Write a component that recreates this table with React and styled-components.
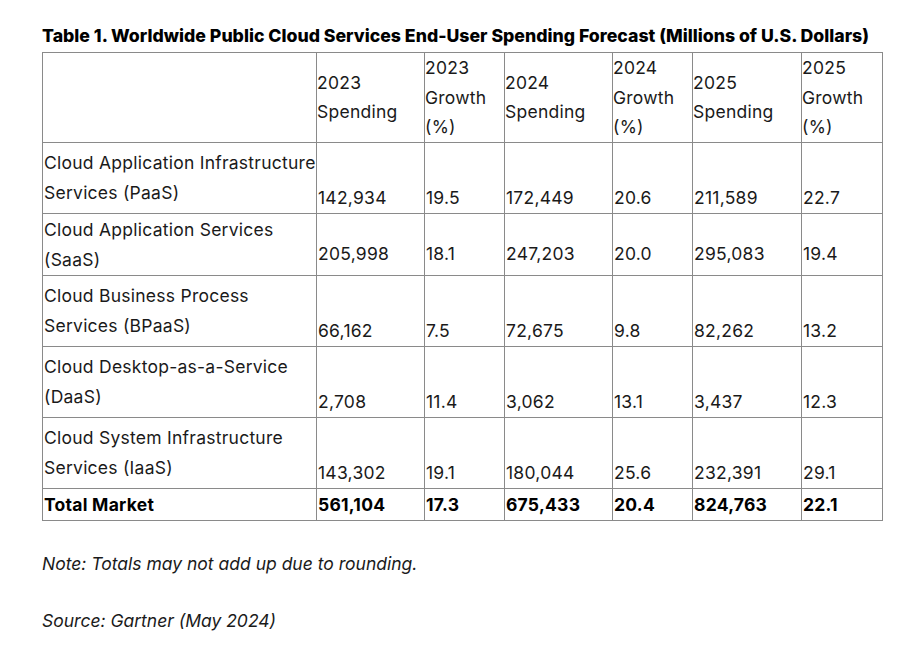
import React from 'react';
import styled, { createGlobalStyle } from 'styled-components';

const GlobalStyle = createGlobalStyle`
  body {
    margin: 0;
    background: #fff;
    color: #1a1a1a;
    font-family: Inter, "Liberation Sans", sans-serif;
  }
`;

const Page = styled.div`
  padding: 27px 0 0 42px;
  width: 840px;
`;

const Title = styled.h3`
  margin: 0 0 7px;
  font-size: 17.7px;
  font-weight: 800;
  line-height: 18px;
  color: #000;
  white-space: nowrap;
`;

const Table = styled.table`
  border-collapse: collapse;
  table-layout: fixed;
  width: 840px;
  font-size: 17.5px;
  letter-spacing: 0.25px;
  line-height: 30px;
`;

const HeadCell = styled.td`
  border: 1px solid #8a8a8a;
  padding: 0;
  vertical-align: middle;
  font-weight: 400;
  line-height: 29.6px;
  text-align: left;
`;

const LabelCell = styled.td`
  border: 1px solid #8a8a8a;
  padding: ${p => (p.$tight ? '1px 0 0' : '5px 0 5px')};
  padding-left: 1px;
  vertical-align: top;
  font-weight: ${p => (p.$total ? 700 : 400)};
  color: ${p => (p.$total ? '#000' : 'inherit')};
`;

const NumCell = styled.td`
  border: 1px solid #8a8a8a;
  padding: 0 0 ${p => (p.$tight ? '6px' : '0')} 1px;
  vertical-align: bottom;
  font-weight: ${p => (p.$total ? 700 : 400)};
  color: ${p => (p.$total ? '#000' : 'inherit')};
`;

const Note = styled.p`
  margin: ${p => p.$top}px 0 0;
  font-style: italic;
  font-size: 17.5px;
  line-height: 24px;
`;

const widths = [274, 108, 80, 108, 80, 109, 81];

const headers = [
  '',
  ['2023', 'Spending'],
  ['2023', 'Growth', '(%)'],
  ['2024', 'Spending'],
  ['2024', 'Growth', '(%)'],
  ['2025', 'Spending'],
  ['2025', 'Growth', '(%)']
];

const rows = [
  { label: ['Cloud Application Infrastructure', 'Services (PaaS)'], values: ['142,934', '19.5', '172,449', '20.6', '211,589', '22.7'] },
  { label: ['Cloud Application Services', '(SaaS)'], values: ['205,998', '18.1', '247,203', '20.0', '295,083', '19.4'], tight: true },
  { label: ['Cloud Business Process', 'Services (BPaaS)'], values: ['66,162', '7.5', '72,675', '9.8', '82,262', '13.2'] },
  { label: ['Cloud Desktop-as-a-Service', '(DaaS)'], values: ['2,708', '11.4', '3,062', '13.1', '3,437', '12.3'] },
  { label: ['Cloud System Infrastructure', 'Services (IaaS)'], values: ['143,302', '19.1', '180,044', '25.6', '232,391', '29.1'] }
];

const total = { label: ['Total Market'], values: ['561,104', '17.3', '675,433', '20.4', '824,763', '22.1'] };

const lines = parts => parts.map((t, i) => (
  <React.Fragment key={i}>
    {i > 0 && <br />}
    {t}
  </React.Fragment>
));

export default function App() {
  return (
    <Page>
      <GlobalStyle />
      <Title>Table 1. Worldwide Public Cloud Services End-User Spending Forecast (Millions of U.S. Dollars)</Title>
      <Table>
        <colgroup>
          {widths.map((w, i) => <col key={i} style={{ width: w }} />)}
        </colgroup>
        <tbody>
          <tr>
            {headers.map((h, i) => (
              <HeadCell key={i}>{h ? lines(h) : '\u00a0'}</HeadCell>
            ))}
          </tr>
          {rows.map(r => (
            <tr key={r.label[0]}>
              <LabelCell $tight={r.tight}>{lines(r.label)}</LabelCell>
              {r.values.map((v, i) => (
                <NumCell key={i} $tight={r.tight}>{v}</NumCell>
              ))}
            </tr>
          ))}
          <tr>
            <LabelCell $tight $total>{total.label[0]}</LabelCell>
            {total.values.map((v, i) => (
              <NumCell key={i} $total>{v}</NumCell>
            ))}
          </tr>
        </tbody>
      </Table>
      <Note $top={31}>Note: Totals may not add up due to rounding.</Note>
      <Note $top={33}>Source: Gartner (May 2024)</Note>
    </Page>
  );
}
